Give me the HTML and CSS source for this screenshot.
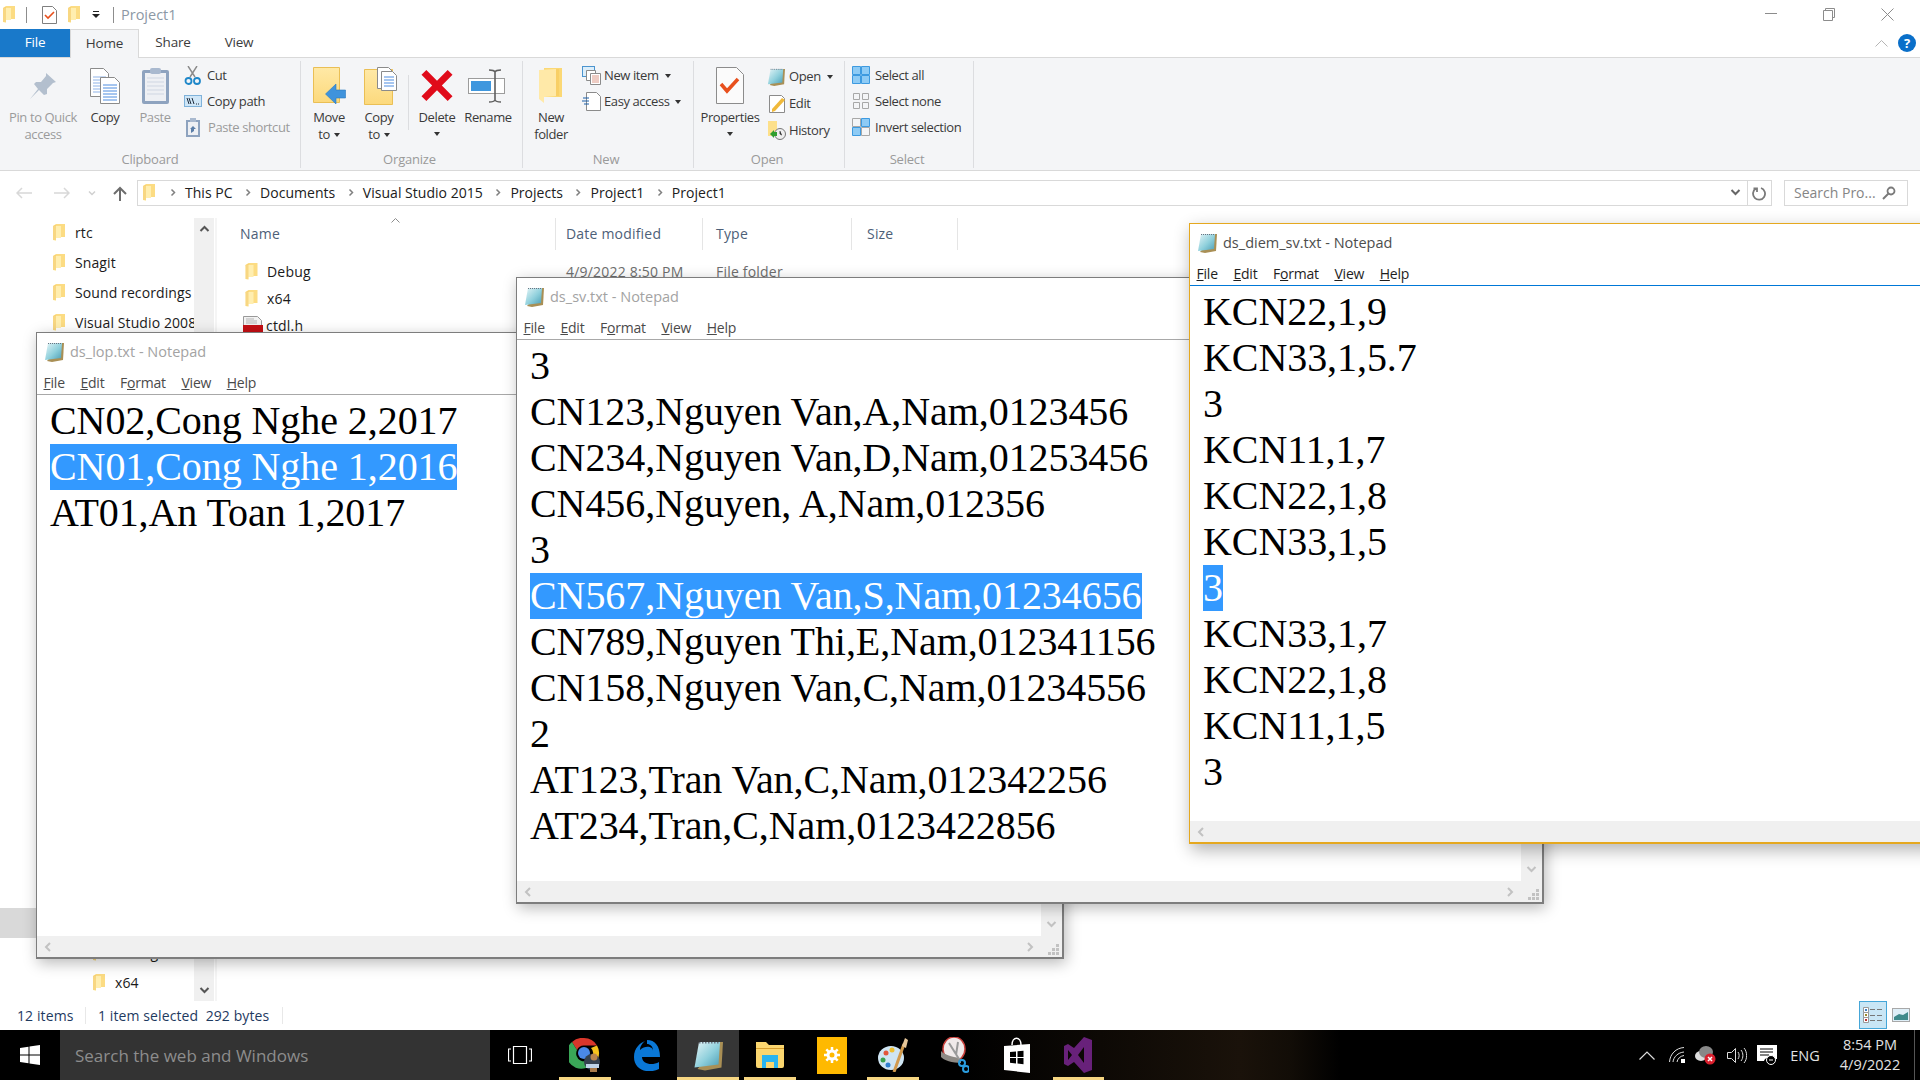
FILE: index.html
```html
<!DOCTYPE html>
<html lang="en">
<head>
<meta charset="utf-8">
<title>Project1</title>
<link rel="stylesheet" href="styles.css">
</head>
<body>
<svg class="defs" width="0" height="0">
  <defs>
    <linearGradient id="padg" x1="0" y1="0" x2="1" y2="1"><stop offset="0" stop-color="#e6f5f7"/><stop offset=".55" stop-color="#8fd0dc"/><stop offset="1" stop-color="#4b9db5"/></linearGradient>
    <linearGradient id="foldg" x1="0" y1="0" x2="0" y2="1"><stop offset="0" stop-color="#ffe9a6"/><stop offset="1" stop-color="#fcd97c"/></linearGradient>
    <symbol id="fold" viewBox="0 0 12 17"><path fill="#fcdc83" d="M0 2 3 0h9v13H3z"/><path fill="#ffeeb0" d="M0 2h8v12H3v3l-3-1z"/><path fill="#f2c55c" d="M0 2 3 1v15l-3 0z" opacity=".55"/></symbol>
    <symbol id="pad" viewBox="0 0 20 20"><path fill="#a98f55" d="M18 1h2l-1 17-11 2-5-1z"/><path fill="url(#padg)" d="M4 1h14l-1 15L1 18z"/><path stroke="#6a7280" stroke-width="1" stroke-dasharray="1 1" d="M4 1.500h14"/></symbol>
    <symbol id="chev-l" viewBox="0 0 8 10"><path fill="none" stroke="currentColor" stroke-width="2" d="M6 1 2 5l4 4"/></symbol>
    <symbol id="chev-r" viewBox="0 0 8 10"><path fill="none" stroke="currentColor" stroke-width="2" d="M2 1l4 4-4 4"/></symbol>
    <symbol id="chev-d" viewBox="0 0 10 8"><path fill="none" stroke="currentColor" stroke-width="2" d="M1 2l4 4 4-4"/></symbol>
    <symbol id="chev-u" viewBox="0 0 10 8"><path fill="none" stroke="currentColor" stroke-width="2" d="M1 6l4-4 4 4"/></symbol>
    <symbol id="grip" viewBox="0 0 12 12"><path fill="#c2c2c2" d="M8 0h3v3H8zM4 4h3v3H4zM8 4h3v3H8zM0 8h3v3H0zM4 8h3v3H4zM8 8h3v3H8z"/></symbol>
    <symbol id="pages" viewBox="0 0 30 36"><path fill="#fff" stroke="#8b8b8b" d="M.5.5h13l5 5v23H.5z"/><path stroke="#8fb3e8" d="M3 9h13M3 12h13M3 15h13M3 18h13M3 21h13M3 24h13"/><path fill="#fff" stroke="#8b8b8b" d="M10.5 9.5h14l5 5v21h-19z"/><path stroke="#4f8de0" d="M13 17h14M13 20h14M13 23h14M13 26h14M13 29h14M13 32h14"/></symbol>
  </defs>
</svg>

<main class="explorer">
  <header class="titlebar">
    <svg class="i-fold" width="12" height="17"><use href="#fold"/></svg>
    <span class="tsep tsep-a"></span>
    <svg class="i-check" width="15" height="18" viewBox="0 0 15 18"><path fill="#fff" stroke="#7f7f7f" d="M.5.5h10l4 4v13H.5z"/><path fill="none" stroke="#e8501d" stroke-width="1.6" d="M3 9l3 3 6-6"/></svg>
    <svg class="i-fold i-fold-b" width="12" height="17"><use href="#fold"/></svg>
    <svg class="i-qa" width="8" height="7" viewBox="0 0 8 7"><path d="M1 0h6v1H1zM0 3h8L4 7z" fill="#222"/></svg>
    <span class="tsep tsep-b"></span>
    <span class="title-text">Project1</span>
    <div class="winbtns">
      <svg width="12" height="13" viewBox="0 0 12 13"><path stroke="#8c8c8c" d="M0 5.5h12"/></svg>
      <svg width="12" height="13" viewBox="0 0 12 13"><path fill="none" stroke="#8c8c8c" d="M2.5 2.5v-2h9v9h-2M.5 2.5h9v10h-9z"/></svg>
      <svg width="13" height="13" viewBox="0 0 13 13"><path stroke="#8c8c8c" d="M.5.5l12 12M12.5.5l-12 12"/></svg>
    </div>
  </header>

  <nav class="tabs">
    <span class="tab tab-file">File</span>
    <span class="tab tab-home">Home</span>
    <span class="tab tab-share">Share</span>
    <span class="tab tab-view">View</span>
    <div class="tabs-right">
      <svg width="13" height="8" viewBox="0 0 13 8"><path fill="none" stroke="#b5b5b5" d="M.5 7.5l6-6 6 6"/></svg>
      <span class="help">?</span>
    </div>
  </nav>

  <section class="ribbon">
    <div class="group g-clip">
      <div class="grp-body">
        <div class="lg lg-pin dim">
          <span class="lg-ic"><svg width="28" height="28" viewBox="0 0 28 28"><path fill="#b3bfce" d="M17 1l10 9-3 1-6 6 0 5-3 1-5-5-9 9 8-10-4-5 2-2 5 0 5-6z"/></svg></span>
          <span>Pin to Quick</span><span>access</span>
        </div>
        <div class="lg lg-copy">
          <span class="lg-ic"><svg width="30" height="36"><use href="#pages"/></svg></span>
          <span>Copy</span>
        </div>
        <div class="lg lg-paste dim">
          <span class="lg-ic"><svg width="27" height="37" viewBox="0 0 27 37"><rect y="3" width="27" height="34" rx="2" fill="#8ea3bf"/><rect x="3" y="6" width="21" height="28" fill="#eef0f4"/><path stroke="#cfd6e2" d="M5 11h17M5 15h17M5 19h17M5 23h17M5 27h17"/><rect x="8" y="1" width="11" height="6" rx="2" fill="#a9b9cf"/></svg></span>
          <span>Paste</span>
        </div>
        <div class="smalls">
          <div class="sm"><svg class="sm-ic" width="18" height="19" viewBox="0 0 18 19"><path stroke="#8a8a8a" stroke-width="1.4" d="M4 0l7 11M13 0 6 11"/><circle cx="4.5" cy="15" r="3" fill="none" stroke="#1e87c9" stroke-width="1.8"/><circle cx="13" cy="15" r="3" fill="none" stroke="#1e87c9" stroke-width="1.8"/></svg><span>Cut</span></div>
          <div class="sm"><svg class="sm-ic" width="18" height="12" viewBox="0 0 18 12"><rect x=".5" y=".5" width="17" height="11" fill="#cfe6f7" stroke="#7fb2da"/><path stroke="#1d2a3a" d="M3 3l2 6M5 3l2 6M8 3l2 6"/><path stroke="#1d2a3a" d="M12 9h1M14 9h1"/></svg><span>Copy path</span></div>
          <div class="sm dim"><svg class="sm-ic sm-ps" width="14" height="19" viewBox="0 0 14 19"><rect y="2" width="14" height="17" fill="#8ea3bf"/><rect x="2" y="4" width="10" height="13" fill="#eef0f4"/><rect x="4" width="6" height="4" fill="#a9b9cf"/><path fill="#5b7ea8" d="M5 15v-4l-1 0 3-3 3 3H8v2z"/></svg><span>Paste shortcut</span></div>
        </div>
      </div>
      <div class="grp-name">Clipboard</div>
    </div>

    <div class="group g-org">
      <div class="grp-body">
        <div class="lg lg-move">
          <span class="lg-ic"><svg width="33" height="37" viewBox="0 0 33 37"><path fill="url(#foldg)" stroke="#eabf55" d="M.5.5h26v35H.5z"/><path fill="#3f93dc" stroke="#2a78c0" stroke-width=".6" d="M12.500 27 23 17v6h9.500v8H23v6z"/></svg></span>
          <span>Move</span><span>to <i class="caret"></i></span>
        </div>
        <div class="lg lg-copyto">
          <span class="lg-ic"><svg class="ic-copyto" width="33" height="38" viewBox="0 0 33 38"><path fill="url(#foldg)" stroke="#eabf55" d="M.5 2.500h28v35H.5z"/><path fill="#fff" stroke="#8b8b8b" d="M13.500 .5h11l4 4v17h-15z"/><path fill="#fff" stroke="#8b8b8b" d="M17.500 4.500h11l4 4v15h-15z"/><path stroke="#4f8de0" d="M20 10h10M20 13h10M20 16h10M20 19h10"/></svg></span>
          <span>Copy</span><span>to <i class="caret"></i></span>
        </div>
        <span class="vline"></span>
        <div class="lg lg-del">
          <span class="lg-ic"><svg width="32" height="31" viewBox="0 0 32 32"><path fill="#e00b1a" d="M5 0 16 11 27 0 32 5 21 16 32 27 27 32 16 21 5 32 0 27 11 16 0 5z"/></svg></span>
          <span>Delete</span><i class="caret caret-b"></i>
        </div>
        <div class="lg lg-ren">
          <span class="lg-ic"><svg width="40" height="34" viewBox="0 0 40 34"><rect x=".5" y="9.500" width="36" height="15" fill="#fff" stroke="#9c9c9c"/><rect x="3" y="12" width="20" height="10" fill="#3f97de"/><path fill="none" stroke="#5f5f5f" stroke-width="1.600" d="M27 2v30M21 1c3 0 5 0 6 2 1-2 3-2 6-2M21 33c3 0 5 0 6-2 1 2 3 2 6 2"/></svg></span>
          <span>Rename</span>
        </div>
      </div>
      <div class="grp-name">Organize</div>
    </div>

    <div class="group g-new">
      <div class="grp-body">
        <div class="lg lg-newf">
          <span class="lg-ic"><svg width="24" height="35" viewBox="0 0 24 35"><path fill="#fbd875" d="M5 0h18v29H5z"/><path fill="#ffe9a8" d="M0 2 17 1v27l-12 1v6L0 31z"/><path fill="#f5c657" d="M17 1h3v27h-3z" opacity=".5"/></svg></span>
          <span>New</span><span>folder</span>
        </div>
        <div class="smalls s-new">
          <div class="sm"><svg class="sm-ic" width="19" height="19" viewBox="0 0 19 19"><rect x=".5" y=".5" width="12" height="10" fill="#dceefa" stroke="#4b94cf"/><path fill="#fff" stroke="#8b8b8b" d="M4.500 4.500h9v10h-9z"/><path fill="#fff" stroke="#8b8b8b" d="M8.500 7.500h10v11h-10z"/><path stroke="#d98" d="M10 10h7M10 12h7M10 14h7M10 16h7"/></svg><span>New item <i class="caret caret-d"></i></span></div>
          <div class="sm"><svg class="sm-ic" width="19" height="19" viewBox="0 0 19 19"><path fill="#fff" stroke="#8b8b8b" d="M4.500.5h10l4 4v14h-14z"/><path stroke="#1a5ea8" d="M1 6h6M0 9h7M2 12h5"/></svg><span>Easy access <i class="caret caret-d"></i></span></div>
        </div>
      </div>
      <div class="grp-name">New</div>
    </div>

    <div class="group g-open">
      <div class="grp-body">
        <div class="lg lg-prop">
          <span class="lg-ic"><svg width="28" height="37" viewBox="0 0 28 37"><path fill="#fbfbfb" stroke="#8c8c8c" d="M.5.500h20l7 7v29h-27z"/><path fill="none" stroke="#e8501d" stroke-width="3.500" d="M5 17l6 7 11-12"/></svg></span>
          <span>Properties</span><i class="caret caret-b"></i>
        </div>
        <div class="smalls s-open">
          <div class="sm"><svg class="sm-ic" width="20" height="18"><use href="#pad"/></svg><span>Open <i class="caret caret-d"></i></span></div>
          <div class="sm sm-in3"><svg class="sm-ic" width="17" height="18" viewBox="0 0 17 18"><path fill="#fff" stroke="#8b8b8b" d="M.5.500h12l3 3v14h-15z"/><path fill="#f0b93a" d="M3 14 13 3l3 2L6 16l-3 1z"/></svg><span>Edit</span></div>
          <div class="sm sm-in2"><svg class="sm-ic" width="18" height="19" viewBox="0 0 18 19"><path fill="#fde08a" d="M0 0h9v15H0z"/><circle cx="12" cy="13" r="5.500" fill="#eee" stroke="#777"/><path stroke="#555" d="M12 10v3l2 1"/><path fill="#2f9e2f" d="M2 13l4-4v2h3v4H6v2z"/></svg><span>History</span></div>
        </div>
      </div>
      <div class="grp-name">Open</div>
    </div>

    <div class="group g-sel">
      <div class="grp-body">
        <div class="smalls s-sel">
          <div class="sm"><svg class="sm-ic" width="18" height="18" viewBox="0 0 18 18"><path fill="#8ecbf5" stroke="#3d9ae0" d="M.5.500h8v8h-8zM9.500.500h8v8h-8zM.5 9.500h8v8h-8zM9.500 9.500h8v8h-8z"/></svg><span>Select all</span></div>
          <div class="sm"><svg class="sm-ic" width="18" height="16" viewBox="0 0 16 16"><path fill="none" stroke="#a8a8a8" d="M.5.500h6v6h-6zM9.500.500h6v6h-6zM.5 9.500h6v6h-6zM9.500 9.500h6v6h-6z"/></svg><span>Select none</span></div>
          <div class="sm"><svg class="sm-ic" width="18" height="18" viewBox="0 0 18 18"><path fill="none" stroke="#a8a8a8" d="M.5.500h8v8h-8zM9.500 9.500h8v8h-8z"/><path fill="#8ecbf5" stroke="#3d9ae0" d="M9.500.500h8v8h-8zM.5 9.500h8v8h-8z"/></svg><span>Invert selection</span></div>
        </div>
      </div>
      <div class="grp-name">Select</div>
    </div>
  </section>

  <div class="addr-row">
    <div class="navbtns">
      <svg width="16" height="12" viewBox="0 0 16 12"><path fill="none" stroke="#d8d8d8" stroke-width="1.500" d="M16 6H1M6 1 1 6l5 5"/></svg>
      <svg width="16" height="12" viewBox="0 0 16 12"><path fill="none" stroke="#d8d8d8" stroke-width="1.500" d="M0 6h15M10 1l5 5-5 5"/></svg>
      <svg class="nb-d" width="8" height="6"><use href="#chev-d"/></svg>
      <svg class="nb-u" width="14" height="15" viewBox="0 0 14 15"><path fill="none" stroke="#6d6d6d" stroke-width="2" d="M7 15V2M1 8l6-6 6 6"/></svg>
    </div>
    <div class="addr">
      <svg class="a-fold" width="12" height="17"><use href="#fold"/></svg>
      <svg class="cr" width="6" height="9"><use href="#chev-r"/></svg><span class="crumb">This PC</span>
      <svg class="cr" width="6" height="9"><use href="#chev-r"/></svg><span class="crumb">Documents</span>
      <svg class="cr" width="6" height="9"><use href="#chev-r"/></svg><span class="crumb">Visual Studio 2015</span>
      <svg class="cr" width="6" height="9"><use href="#chev-r"/></svg><span class="crumb">Projects</span>
      <svg class="cr" width="6" height="9"><use href="#chev-r"/></svg><span class="crumb">Project1</span>
      <svg class="cr" width="6" height="9"><use href="#chev-r"/></svg><span class="crumb">Project1</span>
      <svg class="a-d" width="11" height="8"><use href="#chev-d"/></svg>
      <span class="a-ref"><svg width="15" height="15" viewBox="0 0 15 15"><path fill="none" stroke="#7a7a7a" stroke-width="1.800" d="M4 2.500a6 6 0 1 0 5 -.5M1.500 2.500h3.500v3.500"/></svg></span>
    </div>
    <div class="search"><span>Search Pro...</span><svg width="14" height="14" viewBox="0 0 14 14"><circle cx="9" cy="5" r="3.500" fill="none" stroke="#7a7a7a" stroke-width="1.800"/><path stroke="#7a7a7a" stroke-width="2" d="M6.500 7.500 1 13"/></svg></div>
  </div>

  <div class="content">
    <aside class="nav">
      <div class="tree">
        <div class="tr"><svg width="12" height="17"><use href="#fold"/></svg><span>rtc</span></div>
        <div class="tr"><svg width="12" height="17"><use href="#fold"/></svg><span>Snagit</span></div>
        <div class="tr"><svg width="12" height="17"><use href="#fold"/></svg><span>Sound recordings</span></div>
        <div class="tr"><svg width="12" height="17"><use href="#fold"/></svg><span>Visual Studio 2008</span></div>
        <div class="tree-gap"></div>
        <div class="tr tr-sel"></div>
        <div class="tr tr-sub"><svg width="12" height="17"><use href="#fold"/></svg><span>Debug</span></div>
        <div class="tr tr-sub"><svg width="12" height="17"><use href="#fold"/></svg><span>x64</span></div>
      </div>
      <div class="nav-sb">
        <svg width="11" height="8"><use href="#chev-u"/></svg>
        <svg width="11" height="8"><use href="#chev-d"/></svg>
      </div>
    </aside>
    <section class="list">
      <div class="lh">
        <span class="lc lc-name">Name<svg class="sort" width="9" height="5" viewBox="0 0 9 5"><path fill="none" stroke="#8d8d8d" d="M.5 4.500l4-4 4 4"/></svg></span>
        <span class="lc lc-date">Date modified</span>
        <span class="lc lc-type">Type</span>
        <span class="lc lc-size">Size</span>
      </div>
      <div class="lr"><span class="lr-name"><svg width="13" height="17"><use href="#fold"/></svg>Debug</span><span class="lr-date">4/9/2022 8:50 PM</span><span class="lr-type">File folder</span></div>
      <div class="lr"><span class="lr-name"><svg width="13" height="17"><use href="#fold"/></svg>x64</span></div>
      <div class="lr"><span class="lr-name lr-h"><svg width="20" height="20" viewBox="0 0 20 20"><path fill="#f2f2f2" stroke="#999" d="M.5.500h14l4 4v15h-18z"/><path stroke="#b5b5b5" d="M3 3h8M3 5h11M3 7h11"/><rect y="9" width="20" height="11" fill="#c40f14"/></svg>ctdl.h</span></div>
    </section>
  </div>

  <footer class="status">
    <span class="st st-a">12 items</span>
    <span class="st st-b">1 item selected&nbsp; 292 bytes</span>
    <div class="views">
      <span class="vw vw-on"><svg width="20" height="17" viewBox="0 0 20 17"><path fill="#fff" stroke="#999" d="M.5.500h5v5h-5zM.5 5.500h5v5h-5zM.5 10.500h5v5h-5z"/><path fill="#3d7fc4" d="M2 2h2v2H2z"/><path fill="#9a8a2e" d="M2 7h2v2H2z"/><path fill="#b33" d="M2 12h2v2H2z"/><path stroke="#777" d="M7 2.500h5M14 2.500h5M7 8.500h5M14 8.500h5M7 13.500h5M14 13.500h5"/></svg></span>
      <span class="vw"><svg width="18" height="14" viewBox="0 0 18 14"><rect x=".5" y=".5" width="17" height="13" fill="#dfeff8" stroke="#a8a8a8"/><path fill="#3f8a8c" d="M2 9l5-3 4 1 5-3v8H2z"/></svg></span>
    </div>
  </footer>
</main>

<footer class="taskbar">
  <span class="start"><svg width="20" height="20" viewBox="0 0 20 20"><path fill="#fff" d="M0 3l8.500-1.200v7.700H0zM9.500 1.600 20 0v9.500H9.500zM0 10.500h8.500v7.700L0 17zM9.500 10.500H20V20L9.500 18.400z"/></svg></span>
  <div class="tsearch">Search the web and Windows</div>
  <span class="tv"><svg width="24" height="18" viewBox="0 0 24 18"><path fill="none" stroke="#fff" stroke-width="1.200" d="M5.500.5h13v17h-13zM3 3H.5v12H3M21 3h2.500v12H21"/></svg></span>
  <span class="tk tk-run"><svg width="32" height="34" viewBox="0 0 32 34"><path fill="#d9362b" d="M15 0a15 15 0 0 1 13 7.500H15a7.500 7.500 0 0 0-7 4.500L3 4A15 15 0 0 1 15 0z"/><path fill="#f6c31c" d="M28 7.500A15 15 0 0 1 17 30l6-11a7.500 7.500 0 0 0-1-9z"/><path fill="#3aa757" d="M3 4a15 15 0 0 0 14 26l6-11-1 0a7.500 7.500 0 0 1-14-7z"/><circle cx="15" cy="15" r="6" fill="#4a89e8"/><circle cx="23" cy="24" r="8" fill="#35414f"/><circle cx="25" cy="19" r="3.500" fill="#b9854d"/><path fill="#c0d4e8" d="M17 26h13v4H17z"/><path fill="#a97a4a" d="M21 30h7v4h-7z"/></svg></span>
  <span class="tk"><svg width="26" height="32" viewBox="0 0 26 32"><path fill="#0a78d7" d="M13 0c8 0 13 6 13 17H8c0 7 10 9 17 5v7c-10 5-25 2-25-12C0 8 6 3 11 1 7 4 6 8 6 10c5-5 13-4 13 1 0-5-3-7-6-7z" transform="translate(0 1)"/></svg></span>
  <span class="tk tk-run tk-active"><svg width="30" height="33"><use href="#pad"/></svg></span>
  <span class="tk tk-run"><svg width="28" height="26" viewBox="0 0 28 26"><path fill="#fbd66f" d="M0 0h10l3 3h15v21a2 2 0 0 1-2 2H2a2 2 0 0 1-2-2z"/><path fill="#d79e2e" d="M0 6h28v1H0z"/><path fill="#29b4f0" d="M6 13h16v13h-4v-6h-8v6H6z"/></svg></span>
  <span class="tk"><span class="gear-tile"><svg width="16" height="16" viewBox="0 0 16 16"><circle cx="8" cy="8" r="4" fill="none" stroke="#fff" stroke-width="3"/><path stroke="#fff" stroke-width="2.500" d="M8 0v3M8 13v3M0 8h3M13 8h3M2.300 2.300l2 2M11.700 11.700l2 2M13.700 2.300l-2 2M4.300 11.700l-2 2"/></svg></span></span>
  <span class="tk tk-run"><svg width="30" height="34" viewBox="0 0 30 34"><ellipse cx="13" cy="20" rx="13" ry="12" fill="#cfe5f3"/><circle cx="8" cy="15" r="2.500" fill="#e2563a"/><circle cx="14" cy="12" r="2.500" fill="#f0c030"/><circle cx="5" cy="22" r="2.500" fill="#3aa14e"/><circle cx="10" cy="27" r="2.500" fill="#2f7fd0"/><path stroke="#d29a4e" stroke-width="3" d="M16 34 26 6"/><path fill="#e7c79a" d="M24 8 27 0l3 2-2 8z"/></svg></span>
  <span class="tk"><svg width="28" height="36" viewBox="0 0 28 36"><ellipse cx="13" cy="12" rx="11" ry="12" fill="#f0eaea" stroke="#c8403c" stroke-width="1.500"/><path fill="#8e8a85" d="M0 14c4 5 16 6 20 8v4c-8 0-18-3-20-6z"/><path stroke="#9a9a9a" stroke-width="2" d="M8 6l10 16M17 5 15 18"/><circle cx="21" cy="26" r="3" fill="none" stroke="#2a9de0" stroke-width="2"/><circle cx="25" cy="32" r="3" fill="none" stroke="#2a9de0" stroke-width="2"/></svg></span>
  <span class="tk"><svg width="26" height="36" viewBox="0 0 26 36"><path fill="none" stroke="#fff" stroke-width="1.500" d="M8 8c0-9 9-9 9 0"/><path fill="#fff" d="M0 9 26 7v29L0 33z"/><path fill="#000" d="M6 15l6-.6v5.600H6zM13.500 14.300l6-.6v6.300h-6zM6 21h6v5.400l-6-.6zM13.500 21h6v6.200l-6-.6z"/></svg></span>
  <span class="tk tk-run"><svg width="28" height="36" viewBox="0 0 28 36"><path fill="#68217a" fill-rule="evenodd" d="M20 0l8 3v30l-8 3-10-11-6 4-4-2V9l4-2 6 4zM20 10l-6 8 6 8zM4 13v10l4-5z"/></svg></span>
  <div class="tray">
    <span class="ti ti-1"><svg width="16" height="9" viewBox="0 0 16 9"><path fill="none" stroke="#ddd" stroke-width="1.200" d="M.5 8.500 8 1l7.500 7.500"/></svg></span>
    <span class="ti ti-2"><svg width="16" height="16" viewBox="0 0 16 16"><path fill="none" stroke="#ddd" d="M.5 15C1 7 7 1 15 .5M4 15c.500-5 5-9.500 11-10M8 15c.5-3 3-6 7-6.500"/><rect x="12" y="12" width="4" height="4" fill="#fff"/></svg></span>
    <span class="ti ti-3"><svg width="22" height="20" viewBox="0 0 22 20"><ellipse cx="6" cy="11" rx="6" ry="5" fill="#ddd"/><ellipse cx="11" cy="7" rx="7" ry="6" fill="#888"/><circle cx="15" cy="14" r="5.500" fill="#d9202e"/><path stroke="#fff" stroke-width="1.500" d="M13 12l4 4M17 12l-4 4"/></svg></span>
    <span class="ti ti-4"><svg width="20" height="17" viewBox="0 0 20 17"><path fill="none" stroke="#ddd" d="M.5 5.500h4l4-4v14l-4-4h-4zM11 5c1.500 2 1.500 5 0 7M14 3c2.500 3 2.500 8 0 11M17 1c3.500 4 3.500 11 0 15"/></svg></span>
    <span class="ti ti-5"><svg width="20" height="20" viewBox="0 0 20 20"><path fill="#fff" d="M0 0h20v14h-3a6 6 0 0 0-10 2H0z"/><path stroke="#000" d="M3 4h13M3 7h13M3 10h9"/><circle cx="14" cy="15" r="4.500" fill="#000" stroke="#fff"/><path stroke="#fff" d="M12 15h4"/></svg></span>
    <span class="ti ti-6">ENG</span>
    <span class="ti ti-7"><span>8:54 PM</span><span>4/9/2022</span></span>
    <span class="ti-end"></span>
  </div>
</footer>

<article class="np np1">
  <div class="np-title"><svg width="20" height="20"><use href="#pad"/></svg><span>ds_lop.txt - Notepad</span></div>
  <div class="np-menu"><span><u>F</u>ile</span><span><u>E</u>dit</span><span>F<u>o</u>rmat</span><span><u>V</u>iew</span><span><u>H</u>elp</span></div>
  <div class="np-body">
    <div class="np-text">
      <div class="ln">CN02,Cong Nghe 2,2017</div>
      <div class="ln sel">CN01,Cong Nghe 1,2016</div>
      <div class="ln">AT01,An Toan 1,2017</div>
    </div>
    <div class="np-vs"><svg width="11" height="8"><use href="#chev-d"/></svg></div>
  </div>
  <div class="np-hs">
    <svg width="8" height="10"><use href="#chev-l"/></svg>
    <svg class="hs-r" width="8" height="10"><use href="#chev-r"/></svg>
    <svg class="hs-g" width="12" height="12"><use href="#grip"/></svg>
  </div>
</article>

<article class="np np2">
  <div class="np-title"><svg width="20" height="20"><use href="#pad"/></svg><span>ds_sv.txt - Notepad</span></div>
  <div class="np-menu"><span><u>F</u>ile</span><span><u>E</u>dit</span><span>F<u>o</u>rmat</span><span><u>V</u>iew</span><span><u>H</u>elp</span></div>
  <div class="np-body">
    <div class="np-text">
      <div class="ln">3</div>
      <div class="ln">CN123,Nguyen Van,A,Nam,0123456</div>
      <div class="ln">CN234,Nguyen Van,D,Nam,01253456</div>
      <div class="ln">CN456,Nguyen, A,Nam,012356</div>
      <div class="ln">3</div>
      <div class="ln sel">CN567,Nguyen Van,S,Nam,01234656</div>
      <div class="ln">CN789,Nguyen Thi,E,Nam,012341156</div>
      <div class="ln">CN158,Nguyen Van,C,Nam,01234556</div>
      <div class="ln">2</div>
      <div class="ln">AT123,Tran Van,C,Nam,012342256</div>
      <div class="ln">AT234,Tran,C,Nam,0123422856</div>
    </div>
    <div class="np-vs"><svg width="11" height="8"><use href="#chev-d"/></svg></div>
  </div>
  <div class="np-hs">
    <svg width="8" height="10"><use href="#chev-l"/></svg>
    <svg class="hs-r" width="8" height="10"><use href="#chev-r"/></svg>
    <svg class="hs-g" width="12" height="12"><use href="#grip"/></svg>
  </div>
</article>

<article class="np np3">
  <div class="np-title"><svg width="20" height="20"><use href="#pad"/></svg><span>ds_diem_sv.txt - Notepad</span></div>
  <div class="np-menu"><span><u>F</u>ile</span><span><u>E</u>dit</span><span>F<u>o</u>rmat</span><span><u>V</u>iew</span><span><u>H</u>elp</span></div>
  <div class="np-body">
    <div class="np-text">
      <div class="ln">KCN22,1,9</div>
      <div class="ln">KCN33,1,5.7</div>
      <div class="ln">3</div>
      <div class="ln">KCN11,1,7</div>
      <div class="ln">KCN22,1,8</div>
      <div class="ln">KCN33,1,5</div>
      <div class="ln sel">3</div>
      <div class="ln">KCN33,1,7</div>
      <div class="ln">KCN22,1,8</div>
      <div class="ln">KCN11,1,5</div>
      <div class="ln">3</div>
    </div>
  </div>
  <div class="np-hs">
    <svg width="8" height="10"><use href="#chev-l"/></svg>
  </div>
</article>
</body>
</html>
```

FILE: styles.css
```css
* { box-sizing: border-box; }
html, body { margin: 0; height: 100%; }
body {
  width: 1920px; height: 1080px; overflow: hidden; position: relative;
  background: #fff; color: #1e1e1e;
  font: 14px/17px "Open Sans", "Noto Sans", sans-serif;
  display: flex; flex-direction: column;
}
.defs { position: absolute; }
svg { flex: none; display: block; }
.explorer { height: 1030px; display: flex; flex-direction: column; flex: none; }

/* title bar */
.titlebar { height: 29px; display: flex; align-items: center; padding-left: 3px; flex: none; }
.i-check { margin-left: 15px; margin-top: 1px; }
.i-fold-b { margin-left: 11px; }
.i-qa { margin-left: 12px; }
.tsep { width: 1px; height: 16px; background: #8d8d8d; }
.tsep-a { margin-left: 11px; }
.tsep-b { margin-left: 13px; }
.title-text { margin-left: 7px; color: #8c98a5; font-size: 14.5px; }
.winbtns { margin-left: auto; display: flex; gap: 46px; padding-right: 26px; align-items: center; }

/* tabs */
.tabs { height: 28px; flex: none; display: flex; align-items: stretch; font-size: 13.5px; letter-spacing: -.2px; }
.tab { display: flex; align-items: center; justify-content: center; color: #3c3c3c; padding-bottom: 1px; }
.tab-file { width: 70px; background: #1979ca; color: #fff; padding-bottom: 1px; }
.tab-home { width: 69px; background: #f4f5f7; border: 1px solid #d9d9d9; border-bottom: 0; margin-bottom: -1px; position: relative; z-index: 1; }
.tab-share { width: 66px; margin-left: 1px; }
.tab-view { width: 66px; }
.tabs-right { margin-left: auto; display: flex; align-items: center; gap: 10px; padding-right: 4px; }
.help { width: 18px; height: 18px; border-radius: 50%; background: #0a6fc9; color: #fff; font-weight: 700; font-size: 13px; display: flex; align-items: center; justify-content: center; }

/* ribbon */
.ribbon { height: 114px; flex: none; background: #f4f5f7; border-top: 1px solid #d9d9d9; border-bottom: 1px solid #d9d9d9; display: flex; padding-top: 3px; padding-bottom: 2px; font-size: 13px; letter-spacing: -.4px; }
.group { display: flex; flex-direction: column; border-right: 1px solid #dcdde0; flex: none; }
.g-clip { width: 301px; }
.g-org { width: 222px; }
.g-new { width: 171px; }
.g-open { width: 151px; }
.g-sel { width: 129px; }
.grp-body { flex: 1; display: flex; min-height: 0; padding-top: 1px; }
.grp-name { height: 17px; text-align: center; color: #9a9a9a; letter-spacing: -.2px; }
.g-org .grp-name, .g-new .grp-name, .g-open .grp-name, .g-sel .grp-name { padding-right: 4px; }
.lg { display: flex; flex-direction: column; align-items: center; flex: none; color: #3a3a3a; }
.lg-ic { height: 47px; display: flex; align-items: center; justify-content: center; }
.dim, .dim span { color: #9b9b9b; }
.lg-pin { width: 80px; margin-left: 3px; }
.lg-copy { width: 44px; }
.lg-paste { width: 44px; margin-left: 6px; }
.lg-move { width: 50px; margin-left: 3px; }
.lg-copyto { width: 50px; }
.ic-copyto { margin-left: 3px; }
.lg-del { width: 48px; margin-left: 4px; }
.lg-ren { width: 52px; margin-left: 1px; }
.lg-newf { width: 50px; margin-left: 3px; }
.lg-prop { width: 70px; margin-left: 1px; }
.vline { width: 1px; height: 55px; background: #dcdde0; margin: 13px 0 0 4px; flex: none; }
.caret { display: inline-block; width: 0; height: 0; border: 3.5px solid transparent; border-top: 4px solid #333; border-bottom: 0; vertical-align: 2px; margin-left: 1px; }
.caret-b { display: block; margin: 6px 0 0; }
.caret-d { margin-left: 3px; }
.smalls { display: flex; flex-direction: column; flex: none; margin-left: 7px; }
.sm { height: 26px; display: flex; align-items: center; gap: 5px; color: #3a3a3a; white-space: nowrap; }
.sm-ps { margin: 0 3px 0 2px; }
.s-new { margin-left: 6px; }
.s-new .sm { gap: 3px; }
.s-open { margin: 1px 0 0; }
.s-open .sm { height: 27px; margin-left: 1px; gap: 3px; }
.s-open .sm-in3 { padding-left: 3px; }
.s-open .sm-in2 { padding-left: 2px; }
.s-sel { margin-left: 7px; }

/* address row */
.addr-row { height: 40px; flex: none; display: flex; align-items: flex-start; padding-top: 9px; }
.navbtns { width: 137px; height: 26px; display: flex; align-items: center; padding-left: 16px; color: #d0d0d0; }
.navbtns svg:nth-child(2) { margin-left: 22px; }
.nb-d { margin-left: 18px; }
.nb-u { margin-left: 17px; color: #6d6d6d; }
.addr { width: 1635px; height: 26px; border: 1px solid #d9d9d9; display: flex; align-items: center; padding: 0 0 2px 5px; color: #7f7f7f; }
.a-fold { margin-right: 15px; }
.crumb { color: #202020; margin: 0 12.5px 0 9px; letter-spacing: .03px; }
.cr { color: #808080; }
.a-d { margin-left: auto; margin-right: 6px; color: #666; }
.a-ref { width: 24px; height: 24px; border-left: 1px solid #d9d9d9; display: flex; align-items: center; justify-content: center; margin-bottom: -2px; }
.search { width: 124px; height: 26px; margin-left: 12px; border: 1px solid #d9d9d9; display: flex; align-items: center; justify-content: space-between; padding: 0 11px 1px 9px; color: #858585; }

/* content */
.content { flex: 1; display: flex; padding-top: 7px; min-height: 0; }
.nav { width: 217px; display: flex; border-right: 2px solid #f5f5f5; flex: none; height: 783px; }
.tree { width: 194px; overflow: hidden; flex: none; }
.tr { height: 30px; display: flex; align-items: center; gap: 10px; padding: 0 0 2px 53px; white-space: nowrap; color: #1a1a1a; letter-spacing: .1px; }
.tr-sub { padding-left: 93px; }
.tr-sel { background: #d9d9d9; padding: 0; }
.tree-gap { height: 570px; }
.nav-sb { width: 20px; background: #f0f0f0; display: flex; flex-direction: column; justify-content: space-between; align-items: center; padding: 7px 0; color: #555; }
.list { flex: 1; position: relative; letter-spacing: .2px; }
.lh { height: 32px; display: flex; align-items: center; margin-bottom: 9px; color: #4d6078; }
.lc { height: 32px; display: flex; align-items: center; border-right: 1px solid #e5e5e5; position: relative; padding-bottom: 2px; }
.lc-name { width: 339px; padding-left: 23px; }
.lc-date { width: 147px; padding-left: 10px; }
.lc-type { width: 149px; padding-left: 13px; }
.lc-size { width: 106px; padding-left: 15px; }
.sort { position: absolute; left: 174px; top: 0; }
.lr { height: 27px; display: flex; align-items: center; color: #1a1a1a; padding-bottom: 2px; }
.lr-name { width: 339px; padding-left: 28px; display: flex; align-items: center; gap: 9px; }
.lr-h { padding-left: 26px; gap: 3px; }
.lr-date { width: 160px; padding-left: 10px; color: #6e6e6e; }
.lr-type { color: #6e6e6e; }

/* status */
.status { height: 30px; flex: none; display: flex; align-items: center; color: #1e3a5f; margin-top: -3px; letter-spacing: .1px; }
.st-a { padding-left: 17px; width: 86px; border-right: 1px solid #e8e8e8; }
.st-b { padding-left: 12px; width: 197px; border-right: 1px solid #e8e8e8; }
.views { margin-left: auto; display: flex; align-items: center; gap: 5px; padding-right: 10px; }
.vw { height: 28px; display: flex; align-items: center; justify-content: center; }
.vw-on { width: 28px; background: #c9e6f5; border: 1px solid #45a6d8; }

/* taskbar */
.taskbar { height: 50px; flex: none; display: flex; align-items: stretch; color: #fff;
  background: linear-gradient(90deg, #000 960px, #1a120a 1240px, #120d07 1290px, #000 1340px); }
.start { width: 60px; display: flex; align-items: center; justify-content: center; }
.tsearch { width: 430px; background: #333; color: #8d8d8d; display: flex; align-items: center; padding-left: 15px; font-size: 17px; }
.tv { width: 64px; display: flex; align-items: center; justify-content: center; padding-right: 4px; }
.tk { width: 61.7px; display: flex; align-items: center; justify-content: center; position: relative; }
.tk-run::after { content: ""; position: absolute; left: 5px; right: 5px; bottom: 0; height: 3px; background: #f6d682; }
.tk-active { background: #363636; }
.tk-active::after { left: 0; right: 0; }
.gear-tile { width: 30px; height: 37px; background: #ffb900; display: flex; align-items: center; justify-content: center; }
.tray { margin-left: auto; display: flex; align-items: center; }
.ti { height: 50px; display: flex; align-items: center; justify-content: center; color: #e2e2e2; }
.ti-1 { width: 30px; }
.ti-2 { width: 29px; }
.ti-3 { width: 30px; }
.ti-4 { width: 31px; }
.ti-5 { width: 30px; }
.ti-6 { width: 46px; font-size: 14.5px; }
.ti-7 { width: 84px; flex-direction: column; line-height: 20px; font-size: 14.5px; }
.ti-end { width: 8px; height: 50px; position: relative; }
.ti-end::before { content: ""; position: absolute; left: 2px; top: 0; width: 1px; height: 50px; background: #555; }

/* notepad windows */
.np { position: absolute; width: 1028px; height: 627px; background: #fff; border: 1px solid #7d7d7d; border-bottom-width: 2px; border-right-width: 2px; box-shadow: 2px 4px 14px rgba(0,0,0,.28); display: flex; flex-direction: column; }
.np1 { left: 36px; top: 332px; }
.np2 { left: 516px; top: 277px; }
.np3 { left: 1189px; top: 223px; height: 621px; width: 1040px; border-color: #e5a81f; box-shadow: 2px 6px 16px rgba(0,0,0,.3); }
.np-title { height: 38px; flex: none; display: flex; align-items: center; gap: 6px; padding: 0 0 1px 7px; color: #a3a3a3; font-size: 14.5px; }
.np3 .np-title { color: #4d4d4d; }
.np-menu { height: 24px; flex: none; display: flex; gap: 15.5px; padding-left: 6.500px; align-items: center; color: #4a4a4a; border-bottom: 1px solid #a8a8a8; letter-spacing: -.2px; }
.np3 .np-menu { border-bottom-color: #0078d7; color: #1e1e1e; }
.np-body { flex: 1; display: flex; min-height: 0; }
.np-text { flex: 1; padding: 3px 0 0 13px; font: 40px/46px "Liberation Serif", "Times New Roman", serif; letter-spacing: -.07px; color: #000; overflow: hidden; }
.ln { height: 46px; width: fit-content; white-space: pre; }
.sel { background: #39f; color: #fff; }
.np-vs { width: 21px; background: #f0f0f0; display: flex; flex-direction: column; justify-content: flex-end; align-items: center; padding-bottom: 8px; color: #c2c2c2; }
.np-hs { height: 21px; background: #f0f0f0; flex: none; display: flex; align-items: center; padding-left: 7px; color: #c2c2c2; }
.hs-r { margin-left: auto; margin-right: 14px; }
.hs-g { margin-right: 2px; margin-top: 7px; }
```
